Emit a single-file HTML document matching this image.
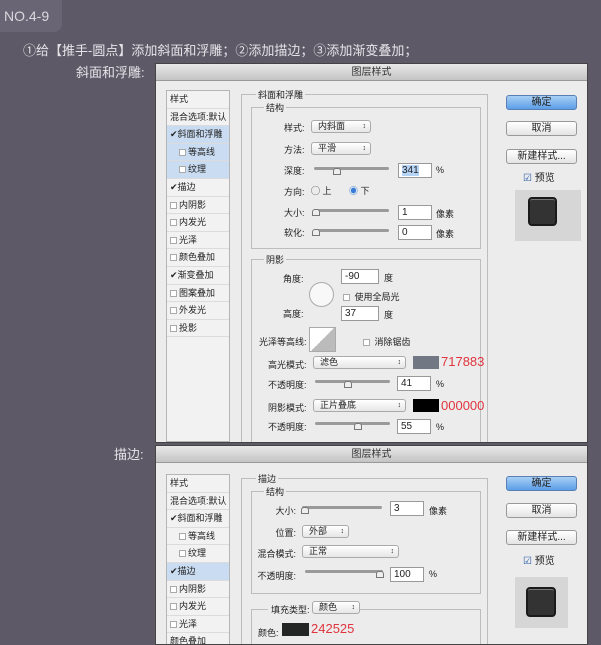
<!DOCTYPE html>
<html><head><meta charset="utf-8"><style>
*{margin:0;padding:0;box-sizing:border-box}
body{width:601px;height:643px;background:#5e5967;position:relative;overflow:hidden;font-family:"Liberation Sans","Noto Sans CJK SC",sans-serif;}
.a{position:absolute;white-space:nowrap}
.t{font-size:9px;color:#222}
.r{text-align:right;width:50px}
.dlg{position:absolute;left:155px;width:433px;background:#ececec;border:1px solid #444;overflow:hidden}
.tb{position:absolute;left:0;top:0;width:100%;height:17px;background:linear-gradient(#e8e8e8,#c4c4c4);border-bottom:1px solid #999;text-align:center;font-size:10px;line-height:17px;color:#333}
.box{position:absolute;border:1px solid #bdbdbd}
.inp{position:absolute;background:#fff;border:1px solid #999;height:15px;font-size:10px;line-height:13px;padding-left:3px;color:#222}
.sel{position:absolute;background:linear-gradient(#fff,#e6e6e6);border:1px solid #aaa;border-radius:3px;height:13px;font-size:9px;line-height:11px;padding-left:6px;color:#222}
.sel:after{content:"\2195";position:absolute;right:4px;top:0;font-size:7px}
.btn{position:absolute;left:350px;width:71px;height:15px;border:1px solid #999;border-radius:3px;background:linear-gradient(#fff,#e4e4e4);font-size:10px;text-align:center;line-height:13px;color:#222}
.blue{background:linear-gradient(#a9cff5,#5b9ee8);border-color:#5a7fb5}
.sl{position:absolute;height:3px;background:#9a9a9a;border-radius:2px}
.kn{position:absolute;width:8px;height:7px;border:1px solid #777;background:#eee;border-radius:3px 3px 0 0}
.list{position:absolute;left:10px;width:64px;background:#f2f2f2;border:1px solid #b5b5b5}
.li{height:17.6px;border-bottom:1px solid #dcdcdc;font-size:9px;line-height:17px;padding-left:3px;color:#222}
.li.s{background:#c9dcf2}
.cb{display:inline-block;width:7px;height:7px;border:1px solid #aaa;background:#fff;margin-right:2px;vertical-align:-1px}
.red{color:#e0343e;font-size:13px}
</style></head><body>
<div class="a" style="left:0;top:0;width:62px;height:32px;background:#6a6574;border-radius:0 0 8px 0"></div>
<div class="a" style="left:4px;top:8px;font-size:14px;color:#d8d8de">NO.4-9</div>
<div class="a" style="left:23px;top:40px;font-size:13px;color:#e4e4e8">①给【推手-圆点】添加斜面和浮雕；②添加描边；③添加渐变叠加；</div>
<div class="a" style="left:76px;top:62px;font-size:13px;color:#e4e4e8">斜面和浮雕:</div>
<div class="a" style="left:114px;top:444px;font-size:13px;color:#e4e4e8">描边:</div>

<!-- dialog 1 -->
<div class="dlg" style="top:63px;height:380px">
<div class="tb">图层样式</div>
<div class="list" style="top:26px;height:352px">
<div class="li">样式</div><div class="li">混合选项:默认</div>
<div class="li s">✔斜面和浮雕</div><div class="li s" style="padding-left:12px"><span class="cb"></span>等高线</div><div class="li s" style="padding-left:12px"><span class="cb"></span>纹理</div>
<div class="li">✔描边</div><div class="li"><span class="cb"></span>内阴影</div><div class="li"><span class="cb"></span>内发光</div><div class="li"><span class="cb"></span>光泽</div><div class="li"><span class="cb"></span>颜色叠加</div><div class="li">✔渐变叠加</div><div class="li"><span class="cb"></span>图案叠加</div><div class="li"><span class="cb"></span>外发光</div><div class="li"><span class="cb"></span>投影</div>
</div>
<div class="box" style="left:85px;top:30px;width:247px;height:350px"></div>
<div class="a t" style="left:100px;top:24px;background:#ececec;padding:0 2px">斜面和浮雕</div>
<div class="box" style="left:95px;top:43px;width:230px;height:142px"></div>
<div class="a t" style="left:108px;top:37px;background:#ececec;padding:0 2px">结构</div>
<div class="a t" style="left:128px;top:57px">样式:</div><div class="sel" style="left:155px;top:56px;width:60px">内斜面</div>
<div class="a t" style="left:128px;top:79px">方法:</div><div class="sel" style="left:155px;top:78px;width:60px">平滑</div>
<div class="a t" style="left:128px;top:100px">深度:</div><div class="sl" style="left:158px;top:103px;width:75px"></div><div class="kn" style="left:177px;top:104px"></div>
<div class="inp" style="left:242px;top:99px;width:34px"><span style="background:#b5d3f5">341</span></div><div class="a t" style="left:280px;top:101px">%</div>
<div class="a t" style="left:128px;top:121px">方向:</div><div class="a t" style="left:155px;top:120px">◯ 上</div><div class="a t" style="left:193px;top:120px;"><span style="color:#3a7ed8">◉</span> 下</div>
<div class="a t" style="left:128px;top:142px">大小:</div><div class="sl" style="left:158px;top:145px;width:75px"></div><div class="kn" style="left:156px;top:145px"></div>
<div class="inp" style="left:242px;top:141px;width:34px">1</div><div class="a t" style="left:280px;top:143px">像素</div>
<div class="a t" style="left:128px;top:162px">软化:</div><div class="sl" style="left:158px;top:165px;width:75px"></div><div class="kn" style="left:156px;top:165px"></div>
<div class="inp" style="left:242px;top:161px;width:34px">0</div><div class="a t" style="left:280px;top:163px">像素</div>
<div class="box" style="left:95px;top:195px;width:230px;height:185px"></div>
<div class="a t" style="left:108px;top:189px;background:#ececec;padding:0 2px">阴影</div>
<div class="a t" style="left:127px;top:208px">角度:</div>
<div class="a" style="left:153px;top:218px;width:25px;height:25px;border-radius:50%;border:1px solid #aaa;background:#f8f8f8"></div>
<div class="inp" style="left:185px;top:205px;width:38px">-90</div><div class="a t" style="left:228px;top:207px">度</div>
<div class="a t" style="left:187px;top:226px"><span class="cb"></span> 使用全局光</div>
<div class="a t" style="left:127px;top:243px">高度:</div>
<div class="inp" style="left:185px;top:242px;width:38px">37</div><div class="a t" style="left:228px;top:244px">度</div>
<div class="a" style="left:153px;top:263px;width:27px;height:25px;border:1px solid #aaa;background:linear-gradient(135deg,#fff 50%,#bbb 50%)"></div>
<div class="a t" style="left:103px;top:271px">光泽等高线:</div>
<div class="a t" style="left:207px;top:271px"><span class="cb"></span> 消除锯齿</div>
<div class="a t" style="left:112px;top:294px">高光模式:</div><div class="sel" style="left:157px;top:292px;width:93px">滤色</div>
<div class="a" style="left:257px;top:292px;width:26px;height:13px;background:#717883"></div><div class="a red" style="left:285px;top:290px">717883</div>
<div class="a t" style="left:112px;top:314px">不透明度:</div><div class="sl" style="left:159px;top:316px;width:75px"></div><div class="kn" style="left:188px;top:317px"></div>
<div class="inp" style="left:241px;top:312px;width:34px">41</div><div class="a t" style="left:280px;top:315px">%</div>
<div class="a t" style="left:112px;top:337px">阴影模式:</div><div class="sel" style="left:157px;top:335px;width:93px">正片叠底</div>
<div class="a" style="left:257px;top:335px;width:26px;height:13px;background:#000"></div><div class="a red" style="left:285px;top:334px">000000</div>
<div class="a t" style="left:112px;top:356px">不透明度:</div><div class="sl" style="left:159px;top:358px;width:75px"></div><div class="kn" style="left:198px;top:359px"></div>
<div class="inp" style="left:241px;top:355px;width:34px">55</div><div class="a t" style="left:280px;top:358px">%</div>
<div class="btn blue" style="top:31px">确定</div><div class="btn" style="top:57px">取消</div><div class="btn" style="top:85px">新建样式...</div>
<div class="a" style="left:367px;top:105px;font-size:10px;color:#222"><span style="color:#2a5aa8">☑</span> 预览</div>
<div class="a" style="left:359px;top:126px;width:66px;height:51px;background:#d6d6d6"></div>
<div class="a" style="left:372px;top:133px;width:29px;height:29px;border-radius:4px;background:#333;border:2px solid #1a1a1a;box-shadow:inset 0 1px #777"></div>
</div>

<!-- dialog 2 -->
<div class="dlg" style="top:445px;height:200px">
<div class="tb">图层样式</div>
<div class="list" style="top:28px;height:180px">
<div class="li">样式</div><div class="li">混合选项:默认</div>
<div class="li">✔斜面和浮雕</div><div class="li" style="padding-left:12px"><span class="cb"></span>等高线</div><div class="li" style="padding-left:12px"><span class="cb"></span>纹理</div>
<div class="li s">✔描边</div><div class="li"><span class="cb"></span>内阴影</div><div class="li"><span class="cb"></span>内发光</div><div class="li"><span class="cb"></span>光泽</div><div class="li">颜色叠加</div>
</div>
<div class="box" style="left:85px;top:32px;width:247px;height:170px"></div>
<div class="a t" style="left:100px;top:26px;background:#ececec;padding:0 2px">描边</div>
<div class="box" style="left:95px;top:45px;width:230px;height:103px"></div>
<div class="a t" style="left:108px;top:39px;background:#ececec;padding:0 2px">结构</div>
<div class="a t r" style="left:90px;top:58px">大小:</div><div class="sl" style="left:146px;top:60px;width:80px"></div><div class="kn" style="left:145px;top:61px"></div>
<div class="inp" style="left:234px;top:55px;width:34px">3</div><div class="a t" style="left:273px;top:58px">像素</div>
<div class="a t r" style="left:90px;top:80px">位置:</div><div class="sel" style="left:146px;top:79px;width:47px">外部</div>
<div class="a t r" style="left:90px;top:101px">混合模式:</div><div class="sel" style="left:146px;top:99px;width:97px">正常</div>
<div class="a t r" style="left:90px;top:123px">不透明度:</div><div class="sl" style="left:149px;top:124px;width:78px"></div><div class="kn" style="left:220px;top:125px"></div>
<div class="inp" style="left:234px;top:121px;width:34px">100</div><div class="a t" style="left:273px;top:123px">%</div>
<div class="box" style="left:95px;top:163px;width:230px;height:40px"></div>
<div class="a t" style="left:112px;top:157px;background:#ececec;padding:0 3px">填充类型:</div><div class="sel" style="left:156px;top:155px;width:48px">颜色</div>
<div class="a t" style="left:102px;top:180px">颜色:</div>
<div class="a" style="left:126px;top:177px;width:27px;height:13px;background:#242525"></div><div class="a red" style="left:155px;top:175px">242525</div>
<div class="btn blue" style="top:30px">确定</div><div class="btn" style="top:57px">取消</div><div class="btn" style="top:84px">新建样式...</div>
<div class="a" style="left:367px;top:106px;font-size:10px;color:#222"><span style="color:#2a5aa8">☑</span> 预览</div>
<div class="a" style="left:359px;top:131px;width:53px;height:51px;background:#d6d6d6"></div>
<div class="a" style="left:370px;top:141px;width:30px;height:30px;border-radius:4px;background:#333;border:2px solid #1a1a1a;box-shadow:inset 0 1px #777"></div>
</div>
</body></html>
